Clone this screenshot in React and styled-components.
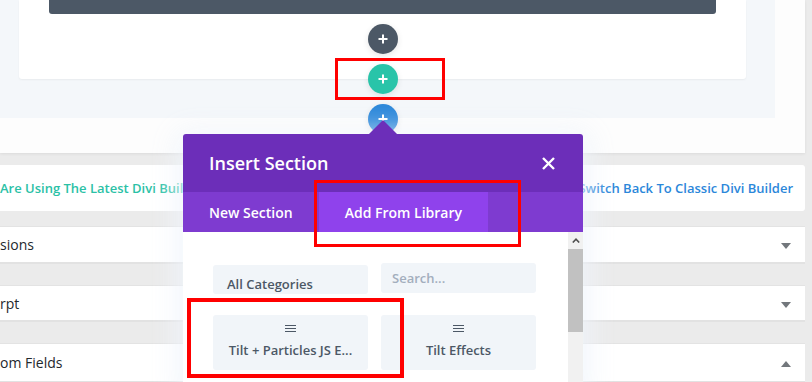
import React from "react";
import styled, { createGlobalStyle } from "styled-components";

const GlobalStyle = createGlobalStyle`
  html, body { margin: 0; padding: 0; }
  body {
    background: #ebebeb;
    font-family: "Open Sans", "Liberation Sans", sans-serif;
    overflow: hidden;
  }
  * { box-sizing: border-box; }
`;

const Page = styled.div`
  position: relative;
  width: 812px;
  height: 382px;
  overflow: hidden;
  background: #ebebeb;
`;

const Builder = styled.div`
  width: 805px;
  height: 153px;
  background: #fdfdfd;
  box-shadow: 0 1px 3px rgba(0, 0, 0, 0.07);
`;

const SectionArea = styled.div`
  width: 775px;
  height: 118px;
  background: #f4f7fa;
  padding-left: 19px;
`;

const RowCard = styled.div`
  width: 727px;
  height: 79px;
  background: #fff;
  border-radius: 0 0 3px 3px;
  box-shadow: 0 1px 2px rgba(0, 0, 0, 0.05);
  padding-left: 30px;
`;

const ModuleBar = styled.div`
  width: 667px;
  height: 14px;
  background: #4c5866;
  border-radius: 0 0 3px 3px;
`;

const Lower = styled.div`
  width: 805px;
  display: flex;
  flex-direction: column;
  padding-top: 12px;
`;

const Notice = styled.div`
  height: 46px;
  background: #fff;
  border-radius: 0 3px 3px 0;
  display: flex;
  align-items: center;
  justify-content: space-between;
  padding-right: 12px;
  font-size: 13px;
  font-weight: 600;
  margin-bottom: 15px;
`;

const NoticeText = styled.span`
  color: ${(p) => p.$color};
  white-space: nowrap;
  line-height: 18px;
`;

const Postbox = styled.div`
  height: ${(p) => p.$h}px;
  margin-bottom: 21px;
  background: #fff;
  border-top: 1px solid #e3e3e3;
  border-bottom: 2px solid #e2e2e2;
  display: flex;
  align-items: center;
  justify-content: space-between;
  padding-right: 14px;
  font-size: 14px;
  color: #23282d;
  white-space: nowrap;
`;

const Caret = styled.span`
  width: 0;
  height: 0;
  margin-top: 3px;
  border-left: 5px solid transparent;
  border-right: 5px solid transparent;
  ${(p) =>
    p.$up
      ? "border-bottom: 6px solid #72777c;"
      : "border-top: 6px solid #72777c;"}
`;

const AddButtons = styled.div`
  position: absolute;
  left: 368px;
  top: 24px;
  display: flex;
  flex-direction: column;
  gap: 10px;
  z-index: 1;
`;

const AddButton = styled.div`
  width: 30px;
  height: 30px;
  border-radius: 50%;
  background: ${(p) => p.$bg};
  box-shadow: 0 2px 6px rgba(0, 0, 0, 0.1);
  display: flex;
  align-items: center;
  justify-content: center;
`;

const Modal = styled.div`
  position: absolute;
  left: 183px;
  top: 134px;
  width: 400px;
  z-index: 2;
  border-radius: 3px 3px 0 0;
  box-shadow: 0 4px 28px 6px rgba(240, 245, 252, 0.9);
  &::before {
    content: "";
    position: absolute;
    left: 186px;
    top: -14px;
    border-left: 14px solid transparent;
    border-right: 14px solid transparent;
    border-bottom: 14px solid #6c2eb9;
  }
`;

const ModalHeader = styled.div`
  height: 58px;
  background: #6c2eb9;
  border-radius: 3px 3px 0 0;
  display: flex;
  align-items: center;
  justify-content: space-between;
  padding: 0 28px 0 26px;
`;

const ModalTitle = styled.h2`
  margin: 0;
  font-size: 18px;
  font-weight: 600;
  color: #fff;
  line-height: 24px;
`;

const Tabs = styled.div`
  height: 40px;
  background: #7e3bd0;
  display: flex;
`;

const Tab = styled.div`
  padding: 0 26px;
  display: flex;
  align-items: center;
  font-size: 14px;
  font-weight: 600;
  color: #fff;
  background: ${(p) => (p.$active ? "#8f42ec" : "transparent")};
`;

const ModalBody = styled.div`
  display: flex;
  background: #fff;
  height: 160px;
`;

const LibraryGrid = styled.div`
  flex: 1;
  padding: 31px 32px 0 30px;
  display: grid;
  grid-template-columns: 155px 155px;
  grid-auto-rows: min-content;
  column-gap: 13px;
  row-gap: 21px;
  align-items: start;
`;

const CategorySelect = styled.div`
  height: 29px;
  margin-top: 2px;
  background: #f1f5f9;
  border-radius: 3px;
  padding: 10px 0 0 14px;
  font-size: 13px;
  font-weight: 600;
  line-height: 18px;
  color: #4c5866;
`;

const SearchBox = styled.div`
  height: 30px;
  background: #f1f5f9;
  border-radius: 3px;
  padding-left: 11px;
  display: flex;
  align-items: center;
  font-size: 13px;
  font-weight: 600;
  color: #a3aebd;
`;

const LayoutCard = styled.div`
  height: 55px;
  background: #f1f5f9;
  border-radius: 3px;
  display: flex;
  flex-direction: column;
  align-items: center;
  padding-top: 9px;
`;

const CardLabel = styled.div`
  margin-top: 8px;
  font-size: 13px;
  font-weight: 600;
  line-height: 18px;
  color: #4c5866;
  white-space: nowrap;
`;

const Scrollbar = styled.div`
  width: 15px;
  background: #f1f1f1;
  display: flex;
  flex-direction: column;
`;

const ScrollArrow = styled.div`
  height: 17px;
  display: flex;
  align-items: center;
  justify-content: center;
`;

const ScrollThumb = styled.div`
  height: 83px;
  background: #c1c1c1;
`;

const Highlight = styled.div`
  position: absolute;
  left: ${(p) => p.$x}px;
  top: ${(p) => p.$y}px;
  width: ${(p) => p.$w}px;
  height: ${(p) => p.$h}px;
  border: ${(p) => p.$b}px solid #ff0000;
  z-index: 3;
`;

const Plus = () => (
  <svg width="10" height="10" viewBox="0 0 10 10">
    <path d="M5 0.5V9.5M0.5 5H9.5" stroke="#fff" strokeWidth="2" />
  </svg>
);

const Menu = () => (
  <svg width="11" height="9" viewBox="0 0 11 9">
    <path d="M0 1.5H11M0 4.5H11M0 7.5H11" stroke="#4c5866" strokeWidth="1" />
  </svg>
);

export default function App() {
  return (
    <Page>
      <GlobalStyle />
      <Builder>
        <SectionArea>
          <RowCard>
            <ModuleBar />
          </RowCard>
        </SectionArea>
      </Builder>

      <Lower>
        <Notice>
          <NoticeText $color="#2bc1a6">Are Using The Latest Divi Builder</NoticeText>
          <NoticeText $color="#2b87da">Switch Back To Classic Divi Builder</NoticeText>
        </Notice>
        <Postbox $h={38}>
          <span>sions</span>
          <Caret />
        </Postbox>
        <Postbox $h={37}>
          <span>rpt</span>
          <Caret />
        </Postbox>
        <Postbox $h={40}>
          <span>om Fields</span>
          <Caret $up />
        </Postbox>
      </Lower>

      <AddButtons>
        <AddButton $bg="#4c5866"><Plus /></AddButton>
        <AddButton $bg="#29c4a9"><Plus /></AddButton>
        <AddButton $bg="#2b87da"><Plus /></AddButton>
      </AddButtons>

      <Modal>
        <ModalHeader>
          <ModalTitle>Insert Section</ModalTitle>
          <svg width="13" height="13" viewBox="0 0 13 13">
            <path d="M1 1L12 12M12 1L1 12" stroke="#fff" strokeWidth="2.4" />
          </svg>
        </ModalHeader>
        <Tabs>
          <Tab>New Section</Tab>
          <Tab $active>Add From Library</Tab>
        </Tabs>
        <ModalBody>
          <LibraryGrid>
            <CategorySelect>All Categories</CategorySelect>
            <SearchBox>Search...</SearchBox>
            <LayoutCard>
              <Menu />
              <CardLabel>Tilt + Particles JS E...</CardLabel>
            </LayoutCard>
            <LayoutCard>
              <Menu />
              <CardLabel>Tilt Effects</CardLabel>
            </LayoutCard>
          </LibraryGrid>
          <Scrollbar>
            <ScrollArrow>
              <svg width="8" height="5" viewBox="0 0 8 5">
                <path d="M0.8 4.5L4 1.2L7.2 4.5" stroke="#505050" strokeWidth="1.6" fill="none" />
              </svg>
            </ScrollArrow>
            <ScrollThumb />
          </Scrollbar>
        </ModalBody>
      </Modal>

      <Highlight $x={335} $y={58} $w={110} $h={42} $b={3} />
      <Highlight $x={314} $y={180} $w={207} $h={67} $b={3} />
      <Highlight $x={187} $y={298} $w={217} $h={80} $b={4} />
    </Page>
  );
}
